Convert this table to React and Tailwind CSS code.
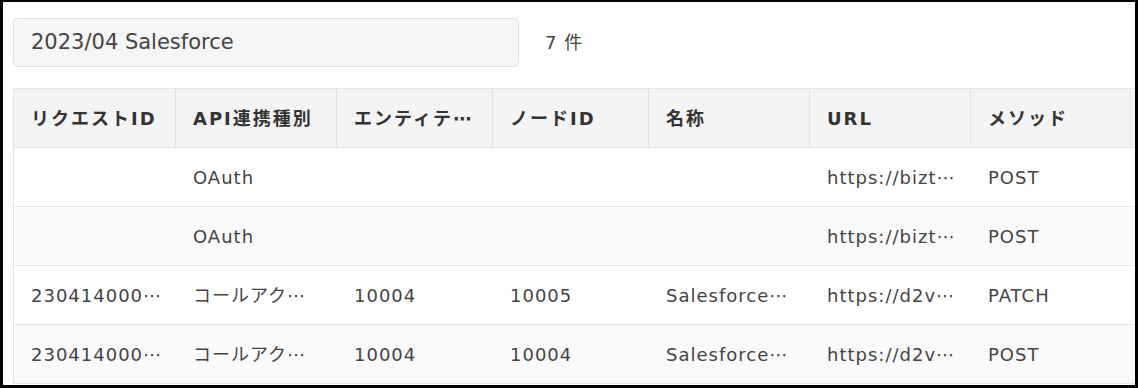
const font = "font-['DejaVu_Sans','Noto_Sans_CJK_JP',sans-serif]";

const columns = [
    { label: "リクエストID", width: "w-[162px]" },
    { label: "API連携種別", width: "w-[161px]" },
    { label: "エンティテ⋯", width: "w-[156px]" },
    { label: "ノードID", width: "w-[156px]" },
    { label: "名称", width: "w-[161px]" },
    { label: "URL", width: "w-[161px]" },
    { label: "メソッド", width: "w-[160px]" },
    { label: "", width: "w-[160px]" },
];

const rows = [
    ["", "OAuth", "", "", "", "https://bizt⋯", "POST", ""],
    ["", "OAuth", "", "", "", "https://bizt⋯", "POST", ""],
    ["230414000⋯", "コールアク⋯", "10004", "10005", "Salesforce⋯", "https://d2v⋯", "PATCH", ""],
    ["230414000⋯", "コールアク⋯", "10004", "10004", "Salesforce⋯", "https://d2v⋯", "POST", ""],
];

function App() {
    return (
        <div className={`h-[388px] w-[1138px] overflow-hidden border-black border-t-2 border-l-[3px] border-r-[3px] border-b-[3px] bg-white ${font}`}>
            <div className="pl-[10px] pt-4">
                {/* search box + count */}
                <div className="flex items-center">
                    <div className="w-[506px] h-[49px] flex items-center px-[17px] bg-[#f6f6f6] border border-[#e2e2e2] rounded text-[21px] text-[#444]">
                        2023/04 Salesforce
                    </div>
                    <span className="ml-[26px] text-[18px] tracking-[1px] text-[#444]">7 件</span>
                </div>

                {/* log table */}
                <div className="mt-[21px] w-[1300px] border-l border-[#e3e3e3]">
                    <div className="flex h-[60px] bg-[#f4f4f4] border-y border-[#e3e3e3]">
                        {columns.map((col, j) => (
                            <div
                                key={j}
                                className={`${col.width} shrink-0 flex items-center px-[17px] border-r border-[#e3e3e3] text-[18px] tracking-[2px] font-bold text-[#333] whitespace-nowrap overflow-hidden`}
                            >
                                {col.label}
                            </div>
                        ))}
                    </div>
                    {rows.map((row, i) => (
                        <div
                            key={i}
                            className={`flex h-[59px] border-b border-[#e6e6e6] ${i % 2 === 1 ? "bg-[#fafafa]" : "bg-white"}`}
                        >
                            {row.map((cell, j) => (
                                <div
                                    key={j}
                                    className={`${columns[j].width} shrink-0 flex items-center px-[17px] text-[18px] tracking-[1px] text-[#444] whitespace-nowrap overflow-hidden`}
                                >
                                    {cell}
                                </div>
                            ))}
                        </div>
                    ))}
                </div>
            </div>
        </div>
    );
}

export default App;
